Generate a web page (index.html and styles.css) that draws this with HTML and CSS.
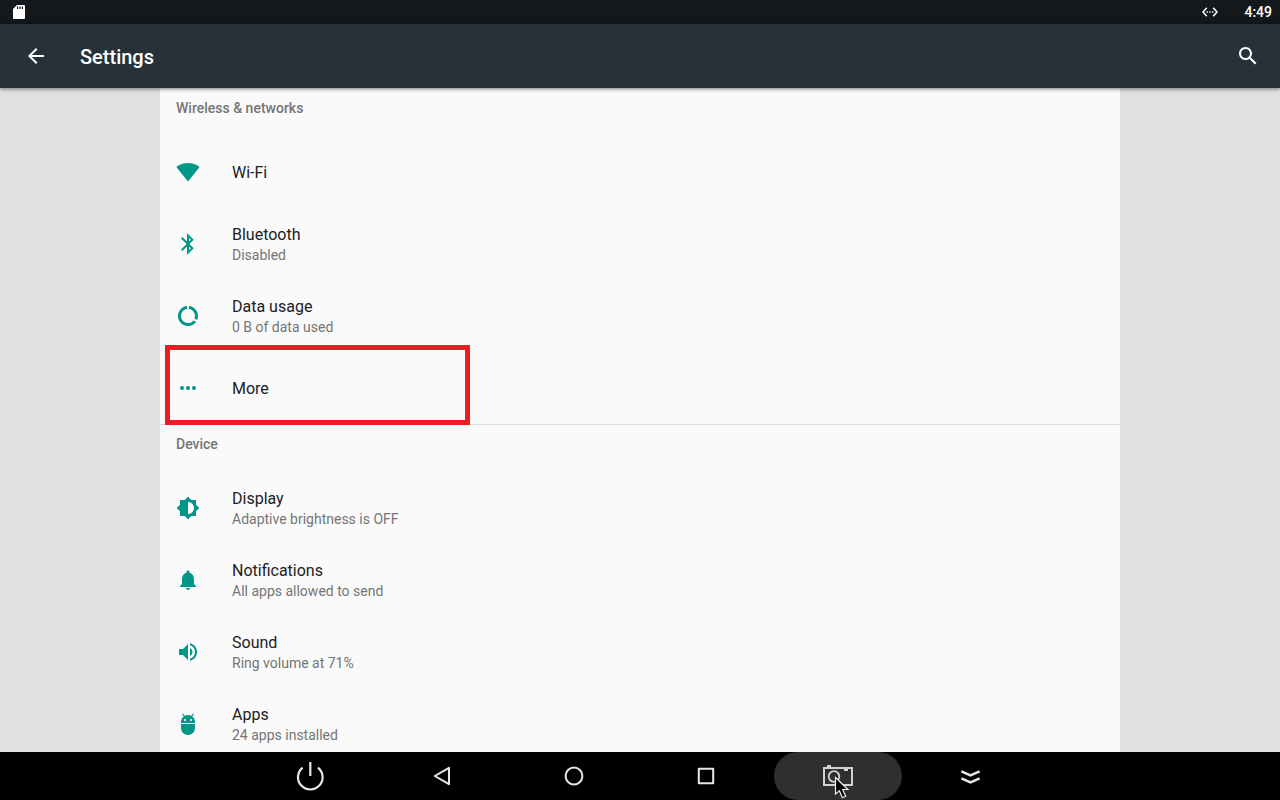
FILE: index.html
```
<!DOCTYPE html>
<html lang="en">
<head>
    <meta charset="UTF-8">
    <meta name="viewport" content="width=device-width, initial-scale=1.0">
    <title>Settings</title>
    <link rel="stylesheet" href="styles.css">
</head>
<body>
    <div class="status-bar">
        <svg class="sd-icon" width="12" height="14" viewBox="0 0 12 14">
            <path fill="#fff" d="M4 0h7q1 0 1 1v12q0 1-1 1H1q-1 0-1-1V4z"/>
            <path fill="#14181b" d="M4 1.5h1.2V4H4zM6.4 1.5h1.2V4H6.4zM8.8 1.5H10V4H8.8z"/>
        </svg>
        <div class="status-right">
            <svg width="16" height="10" viewBox="0 0 16 10">
                <path fill="none" stroke="#fff" stroke-width="1.5" d="M4.8.8L1 5l3.8 4.2M11.2.8L15 5l-3.8 4.2"/>
                <path fill="#fff" d="M4.5 4.3h1.4v1.4H4.5zM7.3 4.3h1.4v1.4H7.3zM10.1 4.3h1.4v1.4h-1.4z"/>
            </svg>
            <span class="clock">4:49</span>
        </div>
    </div>

    <header class="toolbar">
        <button class="icon-btn" aria-label="Back">
            <svg width="24" height="24" viewBox="0 0 24 24"><path d="M20 11H7.83l5.59-5.59L12 4l-8 8 8 8 1.41-1.41L7.83 13H20v-2z"/></svg>
        </button>
        <h1>Settings</h1>
        <button class="icon-btn search" aria-label="Search">
            <svg width="24" height="24" viewBox="0 0 24 24"><path d="M15.5 14h-.79l-.28-.27C15.41 12.59 16 11.11 16 9.5 16 5.91 13.09 3 9.5 3S3 5.91 3 9.5 5.91 16 9.5 16c1.61 0 3.09-.59 4.23-1.57l.27.28v.79l5 4.99L20.49 19l-4.99-5zm-6 0C7.01 14 5 11.99 5 9.5S7.01 5 9.5 5 14 7.01 14 9.5 11.99 14 9.5 14z"/></svg>
        </button>
    </header>

    <main class="content">
        <div class="list">
            <section>
                <h2>Wireless &amp; networks</h2>
                <a class="row" href="#wifi">
                    <svg width="24" height="24" viewBox="0 0 24 24"><path d="M12.01 21.49L23.64 7c-.45-.34-4.93-4-11.64-4C5.28 3 .81 6.66.36 7l11.63 14.49.01.01.01-.01z"/></svg>
                    <span class="row-text">
                        <span class="title">Wi-Fi</span>
                    </span>
                </a>
                <a class="row" href="#bluetooth">
                    <svg width="24" height="24" viewBox="0 0 24 24"><path d="M17.71 7.71L12 2h-1v7.59L6.41 5 5 6.41 10.59 12 5 17.59 6.41 19 11 14.41V22h1l5.71-5.71-4.3-4.29 4.3-4.29zM13 5.83l1.88 1.88L13 9.59V5.83zm1.88 10.46L13 18.17v-3.76l1.88 1.88z"/></svg>
                    <span class="row-text">
                        <span class="title">Bluetooth</span>
                        <span class="summary">Disabled</span>
                    </span>
                </a>
                <a class="row" href="#data">
                    <svg width="24" height="24" viewBox="0 0 24 24"><path d="M13 2.05v3.03c3.39.49 6 3.39 6 6.92 0 .9-.18 1.75-.48 2.54l2.6 1.53c.56-1.24.88-2.62.88-4.07 0-5.18-3.95-9.45-9-9.95zM12 19c-3.87 0-7-3.13-7-7 0-3.53 2.61-6.43 6-6.92V2.05c-5.06.5-9 4.76-9 9.95 0 5.52 4.47 10 9.99 10 3.31 0 6.24-1.61 8.06-4.09l-2.6-1.53C16.17 17.98 14.21 19 12 19z"/></svg>
                    <span class="row-text">
                        <span class="title">Data usage</span>
                        <span class="summary">0 B of data used</span>
                    </span>
                </a>
                <a class="row highlighted" href="#more">
                    <svg width="24" height="24" viewBox="0 0 24 24"><circle cx="6" cy="12" r="2"/><circle cx="12" cy="12" r="2"/><circle cx="18" cy="12" r="2"/></svg>
                    <span class="row-text">
                        <span class="title">More</span>
                    </span>
                </a>
            </section>

            <section>
                <h2>Device</h2>
                <a class="row" href="#display">
                    <svg width="24" height="24" viewBox="0 0 24 24"><path d="M20 15.31L23.31 12 20 8.69V4h-4.69L12 .69 8.69 4H4v4.69L.69 12 4 15.31V20h4.69L12 23.31 15.31 20H20v-4.69zM12 18V6c3.31 0 6 2.69 6 6s-2.69 6-6 6z"/></svg>
                    <span class="row-text">
                        <span class="title">Display</span>
                        <span class="summary">Adaptive brightness is OFF</span>
                    </span>
                </a>
                <a class="row" href="#notifications">
                    <svg width="24" height="24" viewBox="0 0 24 24"><path d="M12 22c1.1 0 2-.9 2-2h-4c0 1.1.89 2 2 2zm6-6v-5c0-3.07-1.64-5.64-4.5-6.32V4c0-.83-.67-1.5-1.5-1.5s-1.5.67-1.5 1.5v.68C7.63 5.36 6 7.92 6 11v5l-2 2v1h16v-1l-2-2z"/></svg>
                    <span class="row-text">
                        <span class="title">Notifications</span>
                        <span class="summary">All apps allowed to send</span>
                    </span>
                </a>
                <a class="row" href="#sound">
                    <svg width="24" height="24" viewBox="0 0 24 24"><path d="M3 9v6h4l5 5V4L7 9H3zm13.5 3c0-1.77-1.02-3.29-2.5-4.03v8.05c1.48-.73 2.5-2.25 2.5-4.02zM14 3.23v2.06c2.89.86 5 3.54 5 6.71s-2.11 5.85-5 6.71v2.06c4.01-.91 7-4.49 7-8.77s-2.99-7.86-7-8.77z"/></svg>
                    <span class="row-text">
                        <span class="title">Sound</span>
                        <span class="summary">Ring volume at 71%</span>
                    </span>
                </a>
                <a class="row" href="#apps">
                    <svg width="24" height="24" viewBox="0 0 24 24"><path d="M5 16c0 3.87 3.13 7 7 7s7-3.13 7-7v-4H5v4zM16.12 4.37l2.1-2.1-.82-.83-2.3 2.31C14.16 3.28 13.12 3 12 3s-2.16.28-3.09.75L6.6 1.44l-.82.83 2.1 2.1C6.14 5.64 5 7.68 5 10v1h14v-1c0-2.32-1.14-4.36-2.88-5.63zM9 9c-.55 0-1-.45-1-1s.45-1 1-1 1 .45 1 1-.45 1-1 1zm6 0c-.55 0-1-.45-1-1s.45-1 1-1 1 .45 1 1-.45 1-1 1z"/></svg>
                    <span class="row-text">
                        <span class="title">Apps</span>
                        <span class="summary">24 apps installed</span>
                    </span>
                </a>
            </section>
        </div>
    </main>

    <nav class="nav-bar">
        <button class="nav-btn" aria-label="Power">
            <svg width="32" height="32" viewBox="0 0 32 32"><path stroke-width="2.2" d="M8.6 7.6a12.3 12.3 0 1 0 15.4 0M16.3 2v14"/></svg>
        </button>
        <button class="nav-btn" aria-label="Back">
            <svg width="32" height="32" viewBox="0 0 32 32"><path stroke-width="2" stroke-linejoin="round" d="M23 7.8v16.4L8.8 16z"/></svg>
        </button>
        <button class="nav-btn" aria-label="Home">
            <svg width="32" height="32" viewBox="0 0 32 32"><circle cx="16" cy="16" r="8.4" stroke-width="2"/></svg>
        </button>
        <button class="nav-btn" aria-label="Recent apps">
            <svg width="32" height="32" viewBox="0 0 32 32"><path stroke-width="2" stroke-linejoin="round" d="M8.8 8.8h14.4v14.4H8.8z"/></svg>
        </button>
        <button class="nav-btn active" aria-label="Screenshot">
            <svg width="32" height="32" viewBox="0 0 32 32">
                <path stroke="#d2d2d2" stroke-width="2" d="M2 8h28v17H2z"/>
                <path stroke="none" fill="#d2d2d2" d="M5 5h4v2H5zM22 9h4v2h-4z"/>
                <circle cx="12" cy="16.5" r="5.3" stroke="#d2d2d2" stroke-width="1.8"/>
            </svg>
            <!-- mouse pointer -->
            <svg class="pointer" width="16" height="24" viewBox="0 0 16 24"><path fill="#000" stroke="#eee" stroke-width="1.2" d="M1.5 1.5v16.4l3.9-3.2 3 7 3.3-1.4-3-6.8h5.2z"/></svg>
        </button>
        <button class="nav-btn" aria-label="Hide bar">
            <svg width="32" height="32" viewBox="0 0 32 32"><path stroke-width="2.4" d="M7.4 11.4l9.1 4 9.1-4M7.4 18.4l9.1 4 9.1-4"/></svg>
        </button>
    </nav>
</body>
</html>
```
FILE: styles.css
```
* {
    box-sizing: border-box;
}

body {
    font-family: Roboto, sans-serif;
    background-color: #e0e0e0;
    margin: 0;
    display: flex;
    flex-direction: column;
    height: 100vh;
    overflow: hidden;
}

svg {
    display: block;
    flex-shrink: 0;
}

button {
    border: none;
    padding: 0;
    background: none;
    cursor: pointer;
}

.status-bar {
    background-color: #14181b;
    color: white;
    height: 24px;
    padding: 0 8px 0 13px;
    display: flex;
    align-items: center;
    justify-content: space-between;
    flex-shrink: 0;
}

.status-right {
    display: flex;
    align-items: center;
    gap: 26px;
}

.clock {
    font-size: 14px;
    font-weight: 500;
    line-height: 24px;
}

.toolbar {
    background-color: #263238;
    color: white;
    height: 64px;
    padding: 0 20px 0 24px;
    display: flex;
    align-items: center;
    flex-shrink: 0;
    position: relative;
    box-shadow: 0 1px 4px rgba(0, 0, 0, 0.5);
}

.toolbar h1 {
    margin: 0 0 0 32px;
    padding-top: 2px;
    font-size: 20px;
    font-weight: 500;
    line-height: 24px;
}

.icon-btn {
    fill: white;
}

.search {
    margin-left: auto;
}

.content {
    flex: 1;
    min-height: 0;
    overflow: hidden;
}

.list {
    background-color: #fafafa;
    max-width: 960px;
    margin: 0 auto;
}

section + section {
    box-shadow: inset 0 1px #dadada;
}

h2 {
    margin: 0;
    height: 48px;
    padding: 10px 16px;
    font-size: 14px;
    font-weight: 500;
    line-height: 20px;
    color: #757575;
}

.row {
    display: flex;
    align-items: center;
    gap: 32px;
    height: 72px;
    padding: 0 16px;
    text-decoration: none;
    fill: #009688;
    position: relative;
}

.row-text {
    display: flex;
    flex-direction: column;
    padding-top: 2px;
}

.title {
    font-size: 16px;
    line-height: 20px;
    color: #212121;
}

.summary {
    font-size: 14px;
    line-height: 20px;
    color: #757575;
}

/* red frame around the row */
.highlighted::after {
    content: "";
    position: absolute;
    z-index: 1;
    box-sizing: border-box;
    left: 5px;
    top: -7px;
    width: 305px;
    height: 80px;
    border: 5px solid #ed1c24;
}

.nav-bar {
    background-color: black;
    height: 48px;
    display: flex;
    justify-content: center;
    gap: 4px;
    flex-shrink: 0;
}

.nav-btn {
    width: 128px;
    height: 48px;
    border-radius: 24px;
    display: flex;
    align-items: center;
    justify-content: center;
    position: relative;
    fill: none;
    stroke: #e8e8e8;
}

.active {
    background-color: #2f2f2f;
}

.pointer {
    position: absolute;
    left: 60px;
    top: 24px;
}
```
